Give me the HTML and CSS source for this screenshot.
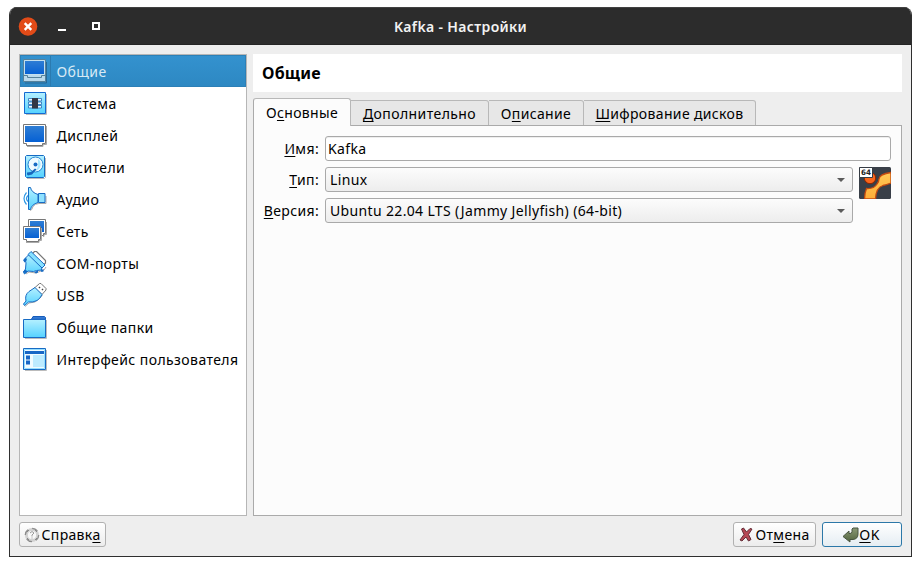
FILE: index.html
```html
<!DOCTYPE html>
<html lang="ru">
<head>
<meta charset="utf-8">
<title>Kafka - Настройки</title>
<link rel="stylesheet" href="styles.css">
</head>
<body>
<svg class="defs" width="0" height="0" aria-hidden="true">
  <defs>
    <linearGradient id="cyan" x1="0" y1="0" x2="0" y2="1"><stop offset="0" stop-color="#b5f0ff"/><stop offset="1" stop-color="#55d2ff"/></linearGradient>
    <linearGradient id="blue" x1="0" y1="0" x2="0" y2="1"><stop offset="0" stop-color="#2f7ed4"/><stop offset="1" stop-color="#0560d4"/></linearGradient>
    <linearGradient id="gold" x1="0" y1="0" x2="0" y2="1"><stop offset="0" stop-color="#ffc956"/><stop offset="1" stop-color="#ffae38"/></linearGradient>
    <linearGradient id="olive" x1="0" y1="0" x2="0" y2="1"><stop offset="0" stop-color="#8a9975"/><stop offset="1" stop-color="#52643f"/></linearGradient>
  </defs>
</svg>
<div class="window">
  <header class="titlebar">
    <div class="controls">
      <svg width="100" height="37" viewBox="0 0 100 37"><circle cx="18" cy="18.500" r="9.3" fill="#e24b18"/><path d="M14.700 15.200l6.600 6.600m0-6.600l-6.600 6.600" stroke="#fff" stroke-width="2.400"/><path d="M48 21h8v2h-8z" fill="#fff"/><path d="M83 15h6v6h-6z" fill="none" stroke="#fff" stroke-width="2"/></svg>
    </div>
    <h1 class="title">Kafka - Настройки</h1>
  </header>
  <div class="body">
    <main class="columns">
      <ul class="nav">
        <li class="item selected"><svg class="ico" viewBox="0 0 26 26"><path d="M2 24h21.500V3" fill="none" stroke="#286895" stroke-width="1"/><path d="M.5.500h22v22H.5z" fill="#b9d9ec" stroke="#55819b"/><path d="M1.500 1.500h20v14h-20z" fill="url(#blue)" stroke="#c3e0ef"/><path d="M1 16.500h3.500v2h14v-2H22" fill="none" stroke="#55819b"/></svg><span>Общие</span></li>
        <li class="item"><svg class="ico" viewBox="0 0 26 26"><path d="M3 23.500h20.500V3" fill="none" stroke="#bbb"/><path d="M1.500 1.500h21v21h-21z" fill="url(#cyan)" stroke="#146bd2"/><path d="M5.500 7.500h13v2.500h-13zm0 3.500h13v2.500h-13zm0 3.500h13V17h-13z" fill="#edf8ff" stroke="#246eb7" stroke-width=".8"/><path d="M9 7h6v10.500H9z" fill="#333744"/></svg><span>Система</span></li>
        <li class="item"><svg class="ico" viewBox="0 0 26 26"><path d="M4 23.500h16v-2h3.500V3" fill="none" stroke="#aaa"/><path d="M.5 1.500h22V20.500h-3v2h-16v-2h-3z" fill="#fff" stroke="#777"/><path d="M2 3h19v16H2z" fill="url(#blue)"/></svg><span>Дисплей</span></li>
        <li class="item"><svg class="ico" viewBox="0 0 26 26"><path d="M4 23.500h17.500l1-1V3" fill="none" stroke="#bbb"/><path d="M2.500 1.500l1-1h17l1 1v20l-1 1h-17l-1-1z" fill="url(#cyan)" stroke="#176bc4"/><circle cx="12.500" cy="9.500" r="7.500" fill="#effaff" stroke="#2584d1"/><path d="M15 4a7 7 0 0 1-2 12l2-5z" fill="#a9e7ff"/><circle cx="12.500" cy="9.500" r="2" fill="#176bc4"/><path d="M4 17.500l4-.5 4-3.500 1.500 1-4.500 5-4 1-1-1z" fill="#1767bd"/></svg><span>Носители</span></li>
        <li class="item"><svg class="ico" viewBox="0 0 26 26"><path d="M7 23.500q2 0 3-4 2-3 6-3h7V9" fill="none" stroke="#aaa"/><path d="M5.500.5h2q1 5 7.500 7v8q-6.500 2-7.500 7h-2z" fill="url(#cyan)" stroke="#176bc4"/><path d="M15.500 6.500h6.500v9h-6.500z" fill="#8fe1ff" stroke="#176bc4"/><path d="M3.500 5.500q-5 6 0 12M5 8.500q-3 3 0 6" fill="none" stroke="#3199e5" stroke-width="1.200"/></svg><span>Аудио</span></li>
        <li class="item"><svg class="ico" viewBox="0 0 26 26"><path d="M20 17.500h1v-2h2.500V3" fill="none" stroke="#aaa"/><path d="M5.500.5h17v14h-2v2h-12v-2h-3z" fill="#fff" stroke="#777"/><path d="M7 2h14v11H7z" fill="url(#blue)"/><path d="M3 23.500h13v-2h2.500V9" fill="none" stroke="#aaa"/><path d="M.5 7.500h17v13h-2v2h-12v-2h-3z" fill="#fff" stroke="#777"/><path d="M2 9h14v10H2z" fill="url(#blue)"/></svg><span>Сеть</span></li>
        <li class="item"><svg class="ico" viewBox="0 0 26 26"><path d="M9.500 2.500l2-2h2l9 9v2.500l-2 2" fill="#fff" stroke="#777" stroke-width="1.200"/><path d="M3 23l3-2 7 1 5-2 3-1 2-3" fill="none" stroke="#aaa"/><path d="M5.500 4L2 7.500 3 12l-.5 6L.5 21l1 2 3.500-3 5.500.5 3-1 5-.5.5-4L8 5z" fill="url(#cyan)" stroke="#176bc4"/><path d="M5 3.500l3-3L22 14l-3 3z" fill="#87e1ff" stroke="#176bc4"/><path d="M0 9l3-2.500L4 9l-2.500 2.500zm11 12l4-1.500v2l-2 1zm6.500-1.500l3-1.500v2.500l-2 .5zM0 20.500l2.500-2 2 2-2.500 2z" fill="#176bc4"/></svg><span>COM-порты</span></li>
        <li class="item"><svg class="ico" viewBox="0 0 26 26"><path d="M11.500 5l5-4.500h1.500l5 5V7L19 11.500z" fill="#fff" stroke="#777"/><path d="M16 4l1 1m2 1l1 1" stroke="#444" stroke-width="1.500"/><path d="M2 23.500l4-3.500 6-1 5-4 2.500-3" fill="none" stroke="#aaa"/><path d="M.5 21l2.500-3q-1.500-6 3-9.500l6-4L19 11.500q-2 4.500-5 6-4 2-8.500 1.500l-4 3.500z" fill="url(#cyan)" stroke="#176bc4"/></svg><span>USB</span></li>
        <li class="item"><svg class="ico" viewBox="0 0 26 26"><path d="M2 23.500h21.500V5" fill="none" stroke="#bbb"/><path d="M8.500 4.500l1.500-3h11.500l1 1v3h-14z" fill="#347ad4" stroke="#175cba"/><path d="M.5 4.500h22v18H.5z" fill="url(#cyan)" stroke="#176bc4"/><path d="M8 3.500h14v1H8z" fill="#246bc8"/></svg><span>Общие папки</span></li>
        <li class="item"><svg class="ico" viewBox="0 0 26 26"><path d="M2 23.500h21.500V3" fill="none" stroke="#bbb"/><path d="M.5 1.500h22v21H.5z" fill="#f0fbff" stroke="#176bc4"/><path d="M1.500 2.500h20v19h-20z" fill="none" stroke="#96deff"/><path d="M2 4h19v3H2zM3 8.500h4v4H3zm0 5h4v4H3z" fill="#1767c6"/><path d="M10 8h11v12H10z" fill="#bcebff"/></svg><span>Интерфейс пользователя</span></li>
      </ul>
      <section class="content">
        <h2 class="heading"><span>Общие</span></h2>
        <div class="tabs">
          <div class="tab active"><span>О<u>с</u>новные</span></div>
          <div class="tab more"><span><u>Д</u>ополнительно</span></div>
          <div class="tab desc"><span>О<u>п</u>исание</span></div>
          <div class="tab crypt"><span><u>Ш</u>ифрование дисков</span></div>
        </div>
        <div class="pane">
          <div class="label"><span><u>И</u>мя:</span></div>
          <div class="field input"><span>Kafka</span></div>
          <div class="label"><span><u>Т</u>ип:</span></div>
          <div class="field select"><span>Linux</span><i class="arrow"></i></div>
          <svg class="os" viewBox="0 0 32 32"><rect width="32" height="32" rx="1.500" fill="#393f48"/><circle cx="11" cy="11" r="5.700" fill="#f9661c" stroke="#8d2500"/><path d="M5.500 32q0-6 2-10.500Q15 22 18 17q2-2.500 2-5 .5-5 12-6.500V16q-5 2-8 2.500-7 2-7.500 13.500z" fill="url(#gold)" stroke="#c34a10" stroke-width="1.300"/><path d="M.5.500h13v10H.5z" fill="#fff" stroke="#353b43"/><text x="2" y="8.300" class="bits" textLength="10" lengthAdjust="spacingAndGlyphs">64</text></svg>
          <div class="label"><span><u>В</u>ерсия:</span></div>
          <div class="field select"><span>Ubuntu 22.04 LTS (Jammy Jellyfish) (64-bit)</span><i class="arrow"></i></div>
        </div>
      </section>
    </main>
    <footer class="actions">
      <div class="button help"><svg width="16" height="16" viewBox="0 0 16 16"><circle cx="8" cy="8" r="5.600" fill="#f7f7f7" stroke="#d2d2d2" stroke-width="3"/><circle cx="8" cy="8" r="6.700" fill="none" stroke="#8b8b8b" stroke-width="1.300" stroke-dasharray="6 4.500"/><path d="M3 5l2-2m6 0l2 2m0 6l-2 2m-6 0l-2-2" stroke="#888"/><path d="M6 6q2-3 4 0l-2 2v1.500m0 1v1" fill="none" stroke="#999"/></svg><span>Справк<u>а</u></span></div>
      <div class="button cancel"><svg width="15" height="16" viewBox="0 0 15 16"><path d="M2.500 2l2-1 3 4L11 1.500l2 .5-3.500 5.500 2.500 5-2.500 1.500L7 10l-4 4-2-1 4-5.500z" fill="#b64855" stroke="#642d37"/></svg><span>От<u>м</u>ена</span></div>
      <div class="button ok"><svg width="17" height="16" viewBox="0 0 17 16"><path d="M1 9.500L7 4v2.500h1q2 0 2-2V2l1-1h5v6q0 5-5 5.500H8V15z" fill="url(#olive)" stroke="#485540"/></svg><span><u>O</u>K</span></div>
    </footer>
  </div>
</div>
</body>
</html>
```

FILE: styles.css
```css
* { box-sizing: border-box; }
body { margin: 0; padding: 7px 9px 0; height: 566px; background: #fff; overflow: hidden; font: 14px/20px "Noto Sans", sans-serif; letter-spacing: .35px; color: #000; }
.defs { position: absolute; }
svg { flex: none; }
span { white-space: nowrap; }
u { text-decoration: underline; text-decoration-thickness: 1px; text-underline-offset: 2px; text-decoration-skip-ink: none; }
.window { width: 903px; height: 550px; border: 1px solid #2f2f2f; border-top: 0; border-radius: 8px 8px 0 0; background: #eee; overflow: hidden; }
.titlebar { display: grid; grid-template-columns: 100px 1fr 100px; height: 38px; padding-bottom: 1px; align-items: center; background: #2c2c2c; border-top: 1px solid #414141; border-bottom: 1px solid #242424; }
.controls { height: 37px; }
.title { margin: 0; text-align: center; color: #f2f2f2; font-size: 14px; line-height: 20px; font-weight: 600; }
.body { padding: 9px 9px 0; }
.columns { display: grid; grid-template-columns: 228px 649px; gap: 6px; height: 462px; }
.nav { list-style: none; margin: 0; padding: 0; border: 1px solid #b6b6b6; background: #fff; }
.item { height: 32px; display: flex; align-items: center; padding: 2px 0 0 3px; gap: 7.5px; letter-spacing: .42px; }
.ico { width: 26px; height: 26px; }
.selected { color: #d8eaf5; background: linear-gradient(90deg, transparent 30px, #2b7bb0 30px, #2b7bb0 31px, transparent 31px), linear-gradient(#3492cf, #2d88c2); box-shadow: inset 0 0 0 1px #2c80b7; }
.heading { height: 38px; margin: 0 0 6px; padding: 9px 0 0 9px; background: #fff; font-size: 16px; line-height: 20px; font-weight: 700; letter-spacing: .2px; }
.tabs { position: relative; display: flex; align-items: flex-end; height: 28px; }
.tabs::after { content: ""; position: absolute; left: 98px; right: 0; bottom: 0; border-bottom: 1px solid #aaa; }
.tab { height: 26px; padding-top: 3px; text-align: center; background: #e7e7e7; border: 1px solid #b8b8b8; border-left: 0; border-radius: 0 3px 0 0; }
.tab.active { width: 98px; height: 28px; padding-top: 4px; background: #fcfcfc; border-left: 1px solid #aaa; border-bottom: 0; border-radius: 3px 3px 0 0; }
.more { width: 138px; letter-spacing: .42px; }
.desc { width: 95px; }
.crypt { width: 172px; }
.pane { height: 390px; background: #fcfcfc; border: 1px solid #aaa; border-top: 0; padding: 10px 10px 0 6px; display: grid; grid-template-columns: 59px 528px 32px; grid-template-rows: repeat(3, 25px); gap: 6px; align-content: start; }
.label { text-align: right; padding-top: 3px; }
.field { border: 1px solid #a9a9a9; border-radius: 3px; height: 25px; padding: 2px 4px; display: flex; justify-content: space-between; align-items: center; }
.input { grid-column: 2 / 4; background: #fff; padding-left: 2px; box-shadow: inset 0 1px #eee; }
.select { grid-column: 2; background: linear-gradient(#fcfcfc, #ededed); }
.arrow { border: 4px solid transparent; border-top: 4px solid #5b5b5b; border-bottom: 0; margin-right: 3px; }
.os { width: 32px; height: 32px; }
.bits { font: bold 7.500px "DejaVu Sans", sans-serif; letter-spacing: 0; fill: #222; }
.actions { display: flex; gap: 6px; margin-top: 6px; }
.button { display: flex; align-items: center; justify-content: center; height: 25px; border: 1px solid #b1b1b1; border-radius: 3px; background: linear-gradient(#fff, #ececec); }
.help { width: 87px; margin-right: auto; gap: 1px; }
.cancel { width: 83px; gap: 1px; }
.ok { width: 80px; padding-right: 2px; gap: 0; border-color: #2c78a8; background: linear-gradient(#fff, #e5edf2); }
```
